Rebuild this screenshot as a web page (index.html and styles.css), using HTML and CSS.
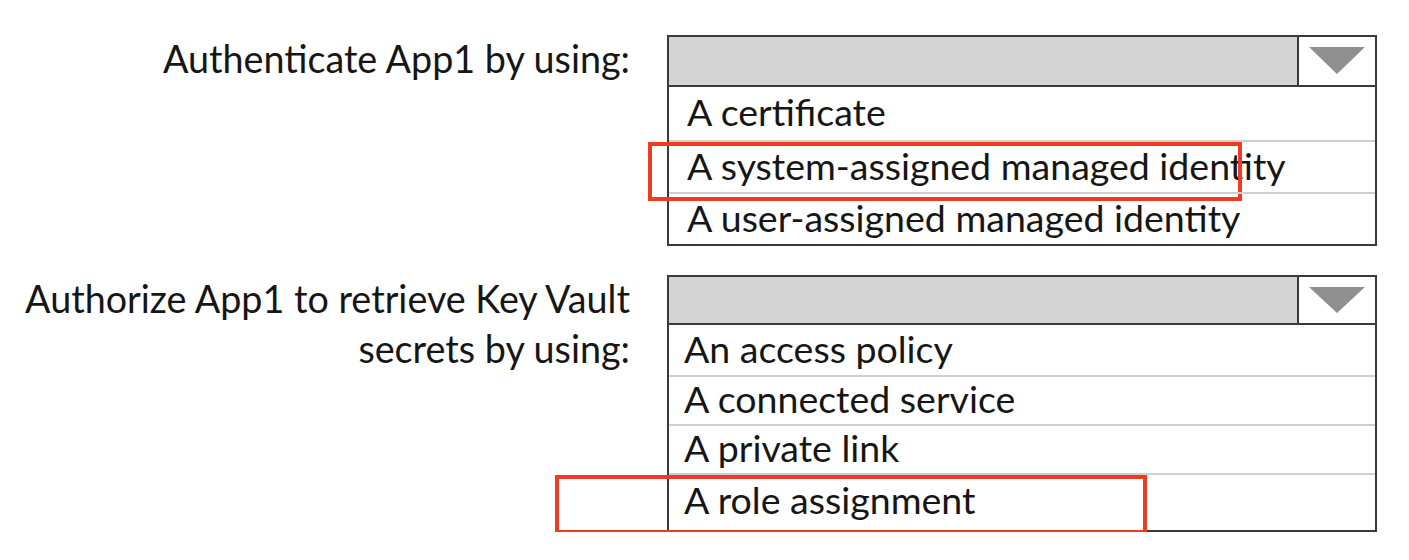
FILE: index.html
```html
<!DOCTYPE html>
<html>
<head>
<meta charset="utf-8">
<link rel="stylesheet" href="styles.css">
</head>
<body>
<div class="page">
  <div class="question">
    <div class="label">Authenticate App1 by using:</div>
    <div class="select">
      <div class="head"><div class="field"></div><div class="arrow"><svg width="56" height="27" viewBox="0 0 56 27"><polygon points="0,0 56,0 28,27" fill="#8f8f8f"/></svg></div></div>
      <div class="opt r53">A certificate</div>
      <div class="opt r52"><span class="mark m1"></span>A system-assigned managed identity</div>
      <div class="opt r52">A user-assigned managed identity</div>
    </div>
  </div>
  <div class="question q2">
    <div class="label">Authorize App1 to retrieve Key Vault<br>secrets by using:</div>
    <div class="select">
      <div class="head h2"><div class="field"></div><div class="arrow"><svg width="56" height="26" viewBox="0 0 56 26"><polygon points="0,0 56,0 28,26" fill="#8f8f8f"/></svg></div></div>
      <div class="opt r50 tight">An access policy</div>
      <div class="opt r49 tight">A connected service</div>
      <div class="opt r49 tight">A private link</div>
      <div class="opt r57 tight"><span class="mark m2"></span>A role assignment</div>
    </div>
  </div>
</div>
</body>
</html>
```

FILE: styles.css
```css
html, body {
  margin: 0;
  padding: 0;
  background: #ffffff;
}
.page {
  padding-top: 35px;
  font-family: Lato, "Open Sans", sans-serif;
  color: #161616;
}
.question {
  display: grid;
  grid-template-columns: 630px 710px;
  column-gap: 37px;
  align-items: start;
}
.q2 {
  margin-top: 29px;
}
.label {
  text-align: right;
  font-size: 37.7px;
  line-height: 50px;
  margin-top: -1px;
}
.select {
  border: 2px solid #3a3a3a;
  box-sizing: border-box;
  width: 710px;
}
.head {
  display: flex;
  height: 48px;
  border-bottom: 2px solid #3a3a3a;
}
.head.h2 {
  height: 46px;
}
.field {
  flex: 1;
  background: #d4d4d4;
  border-right: 2px solid #3a3a3a;
}
.arrow {
  width: 76px;
  display: flex;
  justify-content: center;
  align-items: flex-start;
  padding-top: 10px;
  box-sizing: border-box;
}
.opt {
  position: relative;
  box-sizing: border-box;
  font-size: 37.5px;
  padding-left: 18px;
  border-top: 2px solid #cfcfcf;
  display: flex;
  align-items: center;
  padding-bottom: 4px;
}
.head + .opt {
  border-top: none;
}
.tight {
  padding-left: 15px;
}
.r53 { height: 53px; }
.r52 { height: 52px; }
.r50 { height: 50px; }
.r49 { height: 49px; }
.r57 { height: 57px; align-items: flex-start; padding-top: 2px; }
.mark {
  position: absolute;
  border: 4px solid #f03a22;
  box-sizing: border-box;
  pointer-events: none;
}
.m1 {
  left: -21px;
  top: 0px;
  width: 594px;
  height: 59px;
}
.m2 {
  left: -114px;
  top: 0px;
  width: 592px;
  height: 59px;
}
```
